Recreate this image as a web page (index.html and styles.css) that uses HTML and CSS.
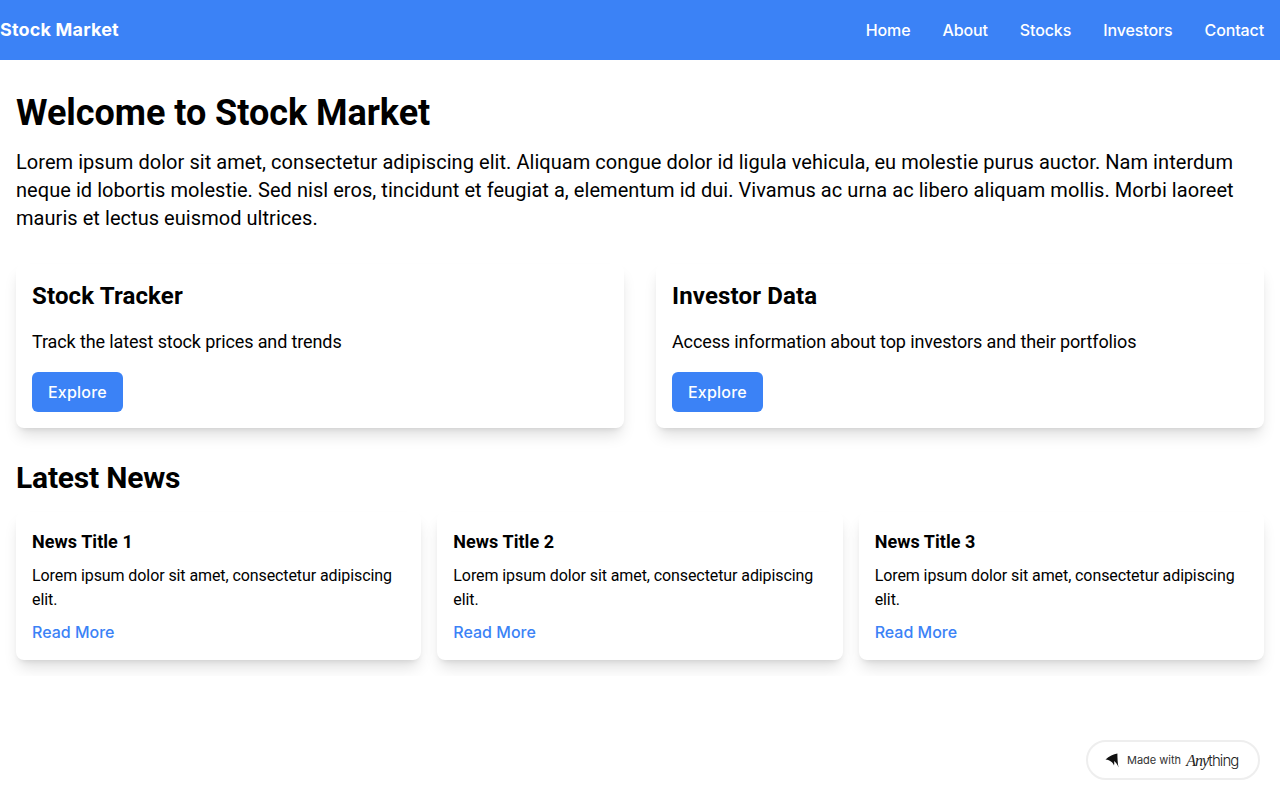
FILE: index.html
```html
<!DOCTYPE html>
<html lang="en">
<head>
<meta charset="UTF-8">
<meta name="viewport" content="width=device-width, initial-scale=1.0">
<title>Stock Market</title>
<link rel="stylesheet" href="styles.css">
</head>
<body>

<nav class="navbar">
    <a class="brand" href="#">Stock Market</a>
    <div class="nav-links">
        <a href="#">Home</a>
        <a href="#">About</a>
        <a href="#">Stocks</a>
        <a href="#">Investors</a>
        <a href="#">Contact</a>
    </div>
</nav>

<main class="container">
    <h1>Welcome to Stock Market</h1>
    <p class="intro">Lorem ipsum dolor sit amet, consectetur adipiscing elit. Aliquam congue dolor id ligula vehicula, eu molestie purus auctor. Nam interdum neque id lobortis molestie. Sed nisl eros, tincidunt et feugiat a, elementum id dui. Vivamus ac urna ac libero aliquam mollis. Morbi laoreet mauris et lectus euismod ultrices.</p>

    <div class="features">
        <div class="card">
            <h2>Stock Tracker</h2>
            <p>Track the latest stock prices and trends</p>
            <button class="explore-button">Explore</button>
        </div>
        <div class="card">
            <h2>Investor Data</h2>
            <p>Access information about top investors and their portfolios</p>
            <button class="explore-button">Explore</button>
        </div>
    </div>

    <h2 class="news-heading">Latest News</h2>
    <div class="news">
        <div class="card news-card">
            <h3>News Title 1</h3>
            <p>Lorem ipsum dolor sit amet, consectetur adipiscing elit.</p>
            <a href="#">Read More</a>
        </div>
        <div class="card news-card">
            <h3>News Title 2</h3>
            <p>Lorem ipsum dolor sit amet, consectetur adipiscing elit.</p>
            <a href="#">Read More</a>
        </div>
        <div class="card news-card">
            <h3>News Title 3</h3>
            <p>Lorem ipsum dolor sit amet, consectetur adipiscing elit.</p>
            <a href="#">Read More</a>
        </div>
    </div>
</main>

<a class="made-with" href="#">
    <svg class="made-icon" width="14" height="15" viewBox="0 0 14 15">
        <path d="M0.5 6.5 C4 3.2 8.5 1 12.4 0.4 C12.4 5 12.7 10.5 13.6 14.6 C12.6 11.6 11 9.4 9 8 C9.4 9.6 9.4 11 9 12.6 C8.2 9.8 5.4 7 0.5 6.5 Z" fill="#111"/>
    </svg>
    <span class="made-text">Made with</span>
    <span class="made-logo"><em>Any</em>thing</span>
</a>

</body>
</html>
```

FILE: styles.css
```css
* {
    box-sizing: border-box;
}
body {
    margin: 0;
    padding: 0;
    font-family: Roboto, Arial, sans-serif;
    color: #000;
    background-color: #fff;
}
a {
    text-decoration: none;
}
.navbar {
    display: flex;
    justify-content: space-between;
    align-items: center;
    height: 60px;
    padding-right: 16px;
    background-color: #3b82f6;
    font-family: Inter, Arial, sans-serif;
}
.brand {
    margin-bottom: 2px;
    color: #fff;
    font-size: 18px;
    font-weight: 700;
    letter-spacing: 0.18px;
}
.nav-links {
    display: flex;
    gap: 32px;
}
.nav-links a {
    color: #fff;
    font-size: 16px;
    font-weight: 500;
    letter-spacing: -0.12px;
}
.container {
    padding: 32px 16px 16px;
}
h1 {
    margin: 0 0 14px;
    font-size: 36px;
    line-height: 42px;
    font-weight: 700;
    letter-spacing: -0.04px;
}
.intro {
    margin: 0 0 32px;
    font-size: 20px;
    line-height: 28px;
    letter-spacing: 0.05px;
}
.features {
    display: grid;
    grid-template-columns: 1fr 1fr;
    gap: 32px;
    margin-bottom: 32px;
}
.card {
    padding: 16px;
    background-color: #fff;
    border-radius: 8px;
    box-shadow: 0 10px 15px -3px rgba(0, 0, 0, 0.13), 0 4px 6px -4px rgba(0, 0, 0, 0.13);
}
.card h2 {
    margin: 0 0 16px;
    font-size: 24px;
    line-height: 32px;
    font-weight: 700;
    letter-spacing: 0.15px;
}
.card p {
    margin: 0 0 16px;
    font-size: 18px;
    line-height: 28px;
    letter-spacing: -0.12px;
}
.explore-button {
    display: block;
    height: 40px;
    padding: 0 16px;
    border: none;
    border-radius: 6px;
    background-color: #3b82f6;
    color: #fff;
    font-family: Inter, Arial, sans-serif;
    font-size: 16px;
    font-weight: 500;
    letter-spacing: 0.2px;
    cursor: pointer;
}
.news-heading {
    margin: 0 0 16px;
    font-size: 30px;
    line-height: 36px;
    font-weight: 700;
    letter-spacing: -0.2px;
}
.news {
    display: grid;
    grid-template-columns: repeat(3, 1fr);
    gap: 16px;
}
.news-card h3 {
    margin: 0 0 8px;
    font-size: 18px;
    line-height: 28px;
    font-weight: 700;
    letter-spacing: 0.05px;
}
.news-card p {
    margin: 0 0 8px;
    font-size: 16px;
    line-height: 24px;
    letter-spacing: -0.09px;
}
.news-card a {
    display: block;
    color: #3b82f6;
    font-family: Inter, Arial, sans-serif;
    font-size: 16px;
    font-weight: 500;
    line-height: 24px;
}
.made-with {
    position: fixed;
    right: 20px;
    bottom: 20px;
    display: flex;
    align-items: center;
    width: 174px;
    height: 40px;
    padding-left: 17px;
    background-color: #fff;
    border: 2px solid #eee;
    border-radius: 20px;
    color: #222;
    font-family: Inter, Arial, sans-serif;
}
.made-icon {
    margin-right: 8px;
}
.made-text {
    margin-right: 5px;
    font-size: 11px;
    font-weight: 400;
    color: #333;
}
.made-logo {
    font-size: 15px;
    letter-spacing: -0.9px;
    font-weight: 300;
}
.made-logo em {
    font-family: "Liberation Serif", serif;
    font-size: 16px;
}
```
